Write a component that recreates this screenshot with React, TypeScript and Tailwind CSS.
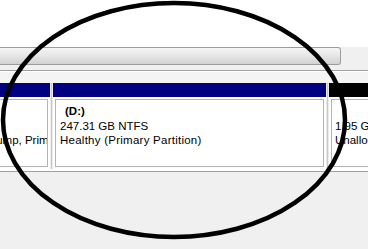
const App = () => {
  return (
    <div className="relative w-[368px] h-[249px] overflow-hidden bg-[#f0f0f0] font-['Liberation_Sans',Arial,sans-serif] text-[11.5px] leading-[14.5px] text-black">
      <div className="h-[47px] bg-white" />

      {/* horizontal scrollbar */}
      <div className="flex h-[18px] bg-[#f0f0f0]">
        <div className="w-[341px] h-full rounded-r-[3px] border border-l-0 border-[#9c9c9c] bg-gradient-to-b from-[#f5f5f5] via-[#e6e6e6] to-[#d2d2d2]" />
      </div>

      <div className="h-[5px] bg-[#f0f0f0]" />
      <div className="h-px bg-[#a0a0a0]" />
      <div className="h-px bg-white" />
      <div className="h-[11px] bg-[#f4f4f4]" />

      {/* partitions row */}
      <div className="flex h-[86px] bg-white">
        <div className="flex w-[50px] shrink-0 flex-col">
          <div className="h-[14px] bg-[#000080]" />
          <div className="flex-1 py-[2px] pr-[2px]">
            <div className="h-full overflow-hidden border border-l-0 border-[#b4b4b4] pt-[4px]">
              <div className="h-[14.5px]" />
              <div className="h-[14.5px]" />
              <div className="-ml-[46px] whitespace-nowrap">Crash Dump, Primary Partition)</div>
            </div>
          </div>
        </div>

        <div className="w-[3px] shrink-0 bg-[#c8c8c8] border-x border-[#ececec]" />

        <div className="flex w-[273px] shrink-0 flex-col">
          <div className="h-[14px] bg-[#000080]" />
          <div className="flex-1 p-[2px]">
            <div className="h-full overflow-hidden border border-[#b4b4b4] pl-[4px] pt-[4px] whitespace-nowrap">
              <div className="pl-[5px] font-bold">(D:)</div>
              <div>247.31 GB NTFS</div>
              <div className="tracking-[0.25px]">Healthy (Primary Partition)</div>
            </div>
          </div>
        </div>

        <div className="w-[3px] shrink-0 bg-[#c8c8c8] border-x border-[#ececec]" />

        <div className="flex min-w-0 flex-1 flex-col">
          <div className="h-[14px] bg-black" />
          <div className="flex-1 py-[2px] pl-[2px]">
            <div className="h-full overflow-hidden border border-r-0 border-[#b4b4b4] pl-[3px] pt-[4px] whitespace-nowrap">
              <div className="h-[14.5px]" />
              <div>1.95 GB</div>
              <div>Unallocated</div>
            </div>
          </div>
        </div>
      </div>

      <div className="h-[2px] bg-white" />
      <div className="h-px bg-[#a0a0a0]" />

      {/* hand-drawn circle annotation */}
      <svg className="pointer-events-none absolute inset-0" width="368" height="249" viewBox="0 0 368 249">
        <ellipse cx="174" cy="120" rx="171" ry="117" fill="none" stroke="#000" strokeWidth="4.5" />
      </svg>
    </div>
  );
};

export default App;
